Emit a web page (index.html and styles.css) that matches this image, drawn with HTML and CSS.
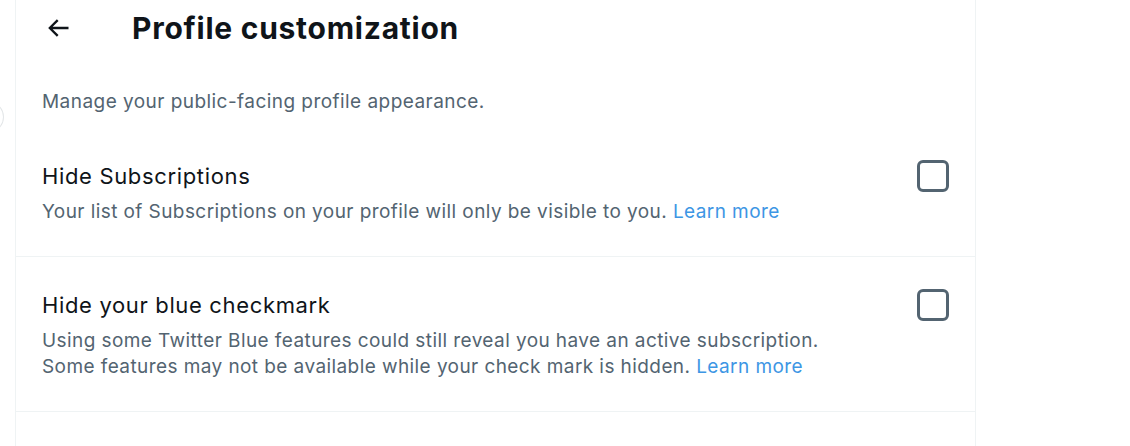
FILE: index.html
```html
<!DOCTYPE html>
<html lang="en">
<head>
<meta charset="utf-8">
<title>Profile customization</title>
<link rel="stylesheet" href="styles.css">
</head>
<body>
<div class="edge-circle"></div>
<main class="panel">
  <header class="header">
    <button class="back" aria-label="Back">
      <svg viewBox="0 0 24 24" width="28" height="28"><path d="M7.414 13l5.043 5.04-1.414 1.42L3.586 12l7.457-7.46 1.414 1.42L7.414 11H21v2H7.414z"/></svg>
    </button>
    <h1 class="title">Profile customization</h1>
  </header>
  <p class="desc">Manage your public-facing profile appearance.</p>
  <section class="row">
    <div class="row-text">
      <div class="row-title">Hide Subscriptions</div>
      <div class="row-sub">Your list of Subscriptions on your profile will only be visible to you. <a class="link" href="#">Learn more</a></div>
    </div>
    <span class="checkbox"></span>
  </section>
  <section class="row">
    <div class="row-text">
      <div class="row-title">Hide your blue checkmark</div>
      <div class="row-sub">Using some Twitter Blue features could still reveal you have an active subscription.<br>Some features may not be available while your check mark is hidden. <a class="link" href="#">Learn more</a></div>
    </div>
    <span class="checkbox"></span>
  </section>
</main>
</body>
</html>
```

FILE: styles.css
```css
html, body {
  margin: 0;
  padding: 0;
  background: #ffffff;
  height: 100%;
  overflow: hidden;
}
body {
  font-family: Inter, "Noto Sans", sans-serif;
  color: #0f1419;
  position: relative;
}
.edge-circle {
  position: absolute;
  left: -24px;
  top: 102px;
  width: 26px;
  height: 28px;
  border: 1px solid #e3e6e8;
  border-radius: 50%;
}
.panel {
  margin-left: 15px;
  width: 959px;
  min-height: 100%;
  border-left: 1px solid #eff3f4;
  border-right: 1px solid #eff3f4;
}
.header {
  height: 56px;
  display: flex;
  align-items: center;
  padding-left: 28px;
}
.back {
  width: 28px;
  height: 28px;
  padding: 0;
  border: none;
  background: none;
  display: flex;
  align-items: center;
  justify-content: center;
  fill: #0f1419;
}
.title {
  margin: 0 0 0 60px;
  font-size: 30px;
  font-weight: 700;
  line-height: 34px;
  letter-spacing: 0.75px;
}
.desc {
  margin: 0;
  padding: 33px 26px 13px 26px;
  font-size: 19px;
  line-height: 26px;
  letter-spacing: 0.45px;
  color: #536471;
}
.row {
  display: flex;
  justify-content: space-between;
  align-items: flex-start;
  padding: 33px 26px 31px 26px;
  border-bottom: 1px solid #eff3f4;
}
.row-title {
  font-size: 22px;
  line-height: 30px;
  letter-spacing: 0.65px;
  color: #0f1419;
}
.row-sub {
  margin-top: 8px;
  font-size: 19px;
  line-height: 26px;
  letter-spacing: 0.42px;
  color: #536471;
}
.link {
  color: #3d96e4;
  text-decoration: none;
}
.checkbox {
  width: 26px;
  height: 26px;
  margin-top: -1px;
  border: 3px solid #536471;
  border-radius: 6px;
  flex-shrink: 0;
}
```
